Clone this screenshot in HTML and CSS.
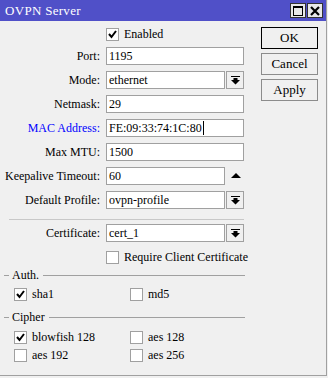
FILE: index.html
```html
<!DOCTYPE html>
<html>
<head>
<meta charset="utf-8">
<link rel="stylesheet" href="styles.css">
</head>
<body>
<div class="window">
  <div class="titlebar">
    <span class="title">OVPN Server</span>
    <div class="tb-btns">
      <span class="tb-btn"><svg width="10" height="10" viewBox="0 0 10 10"><rect x="0.5" y="0.5" width="9" height="9" fill="none" stroke="#000" stroke-width="1"/><rect x="0" y="0" width="10" height="2" fill="#000"/></svg></span>
      <span class="tb-btn"><svg width="10" height="10" viewBox="0 0 10 10"><path d="M1 1 L9 9 M9 1 L1 9" stroke="#000" stroke-width="2.2"/></svg></span>
    </div>
  </div>
  <div class="content">
    <div class="form">
      <div class="row row-enabled">
        <span></span>
        <div class="check"><span class="box"><svg width="11" height="11" viewBox="0 0 11 11"><path d="M2 5 L4.5 8 L9 2" fill="none" stroke="#000" stroke-width="2"/></svg></span>Enabled</div>
      </div>
      <div class="row"><span class="label">Port:</span><span class="field">1195</span></div>
      <div class="row"><span class="label">Mode:</span><div class="combo"><span class="field">ethernet</span><span class="dd"><svg width="9" height="9" viewBox="0 0 9 9"><rect x="0" y="0" width="9" height="1" fill="#000"/><polygon points="2.5,2 6.5,2 6.5,4 9,4 4.5,8.5 0,4 2.5,4" fill="#000"/></svg></span></div></div>
      <div class="row"><span class="label">Netmask:</span><span class="field">29</span></div>
      <div class="row"><span class="label blue">MAC Address:</span><span class="field">FE:09:33:74:1C:80<span class="caret"></span></span></div>
      <div class="row"><span class="label">Max MTU:</span><span class="field">1500</span></div>
      <div class="row"><span class="label">Keepalive Timeout:</span><div class="spin"><span class="field">60</span><span class="up"></span></div></div>
      <div class="row"><span class="label">Default Profile:</span><div class="combo"><span class="field">ovpn-profile</span><span class="dd"><svg width="9" height="9" viewBox="0 0 9 9"><rect x="0" y="0" width="9" height="1" fill="#000"/><polygon points="2.5,2 6.5,2 6.5,4 9,4 4.5,8.5 0,4 2.5,4" fill="#000"/></svg></span></div></div>
      <div class="sep"></div>
      <div class="row row-cert"><span class="label">Certificate:</span><div class="combo"><span class="field">cert_1</span><span class="dd"><svg width="9" height="9" viewBox="0 0 9 9"><rect x="0" y="0" width="9" height="1" fill="#000"/><polygon points="2.5,2 6.5,2 6.5,4 9,4 4.5,8.5 0,4 2.5,4" fill="#000"/></svg></span></div></div>
      <div class="row row-check"><span></span><div class="check"><span class="box"></span>Require Client Certificate</div></div>

      <div class="group-head group-auth"><span class="dash"></span><span class="gtitle">Auth.</span><span class="gline"></span></div>
      <div class="checks">
        <div class="check"><span class="box"><svg width="11" height="11" viewBox="0 0 11 11"><path d="M2 5 L4.5 8 L9 2" fill="none" stroke="#000" stroke-width="2"/></svg></span>sha1</div>
        <div class="check"><span class="box"></span>md5</div>
      </div>

      <div class="group-head group-cipher"><span class="dash"></span><span class="gtitle">Cipher</span><span class="gline"></span></div>
      <div class="checks">
        <div class="check"><span class="box"><svg width="11" height="11" viewBox="0 0 11 11"><path d="M2 5 L4.5 8 L9 2" fill="none" stroke="#000" stroke-width="2"/></svg></span>blowfish 128</div>
        <div class="check"><span class="box"></span>aes 128</div>
      </div>
      <div class="checks checks-last">
        <div class="check"><span class="box"></span>aes 192</div>
        <div class="check"><span class="box"></span>aes 256</div>
      </div>
    </div>
    <div class="actions">
      <span class="btn primary">OK</span>
      <span class="btn">Cancel</span>
      <span class="btn">Apply</span>
    </div>
  </div>
</div>
</body>
</html>
```

FILE: styles.css
```css
* { box-sizing: border-box; }
html, body { margin: 0; padding: 0; background: #f0f0f0; }
body {
  font-family: "Liberation Serif", "Times New Roman", serif;
  font-size: 12px;
  color: #000;
}
.window {
  width: 327px;
  height: 376px;
  border-right: 1px solid #a0a0a0;
  border-bottom: 1px solid #a0a0a0;
  background: #f0f0f0;
}
.titlebar {
  height: 21px;
  background: #5050c8;
  display: flex;
  align-items: center;
  justify-content: space-between;
  padding: 0 3px 0 5px;
}
.title {
  color: #fff;
  font-size: 13px;
  letter-spacing: 0.3px;
}
.tb-btns { display: flex; gap: 1px; }
.tb-btn {
  width: 16px;
  height: 15px;
  background: #e8e8e8;
  border: 1px solid #333;
  display: flex;
  align-items: center;
  justify-content: center;
}
.content {
  display: flex;
  padding-top: 6px;
}
.form {
  width: 250px;
  display: flex;
  flex-direction: column;
}
.row {
  display: grid;
  grid-template-columns: 100px 138px;
  column-gap: 6px;
  align-items: center;
  height: 18px;
  margin-bottom: 6px;
}
.row-enabled { height: 14px; margin-bottom: 6px; }
.row-cert { margin-bottom: 9px; }
.row-check { height: 13px; margin-bottom: 0; }
.label { text-align: right; white-space: nowrap; }
.label.blue { color: #0000ff; }
.field {
  display: flex;
  align-items: center;
  height: 18px;
  background: #fff;
  border: 1px solid #a0a0a0;
  padding-left: 2px;
  white-space: nowrap;
}
.caret {
  display: inline-block;
  width: 1px;
  height: 14px;
  background: #000;
  margin-left: 1px;
}
.combo {
  display: grid;
  grid-template-columns: 119px 18px;
  column-gap: 1px;
}
.dd {
  height: 18px;
  border: 1px solid #a0a0a0;
  background: #f0f0f0;
  display: flex;
  align-items: center;
  justify-content: center;
}
.spin {
  display: grid;
  grid-template-columns: 119px 10px;
  column-gap: 6px;
  align-items: center;
}
.up {
  width: 0;
  height: 0;
  border-left: 5px solid transparent;
  border-right: 5px solid transparent;
  border-bottom: 5px solid #000;
  margin-top: -2px;
}
.sep {
  margin: 4px 0 4px 9px;
  width: 235px;
  height: 1px;
  background: #c8c8c8;
}
.check {
  display: flex;
  align-items: center;
  gap: 5px;
  white-space: nowrap;
  height: 13px;
}
.box {
  width: 13px;
  height: 13px;
  flex: none;
  background: #fff;
  border: 1px solid #a0a0a0;
  display: flex;
  align-items: center;
  justify-content: center;
}
.group-head {
  display: flex;
  align-items: center;
  height: 14px;
  width: 245px;
}
.group-auth { margin-top: 4px; margin-bottom: 6px; }
.group-cipher { margin-top: 9px; margin-bottom: 7px; }
.dash { width: 5px; height: 1px; background: #a0a0a0; margin-left: 4px; }
.gtitle { padding: 0 4px 0 3px; }
.gline { flex: 1; height: 1px; background: #a0a0a0; }
.checks {
  display: grid;
  grid-template-columns: 116px auto;
  padding-left: 14px;
  height: 13px;
}
.checks + .checks { margin-top: 5px; }
.actions {
  margin-left: auto;
  margin-right: 8px;
  display: flex;
  flex-direction: column;
  gap: 4px;
}
.btn {
  width: 57px;
  height: 22px;
  border: 1px solid #8c8c8c;
  background: #f0f0f0;
  display: flex;
  align-items: center;
  justify-content: center;
  font-size: 13px;
}
.btn.primary { border-color: #000; }
```
